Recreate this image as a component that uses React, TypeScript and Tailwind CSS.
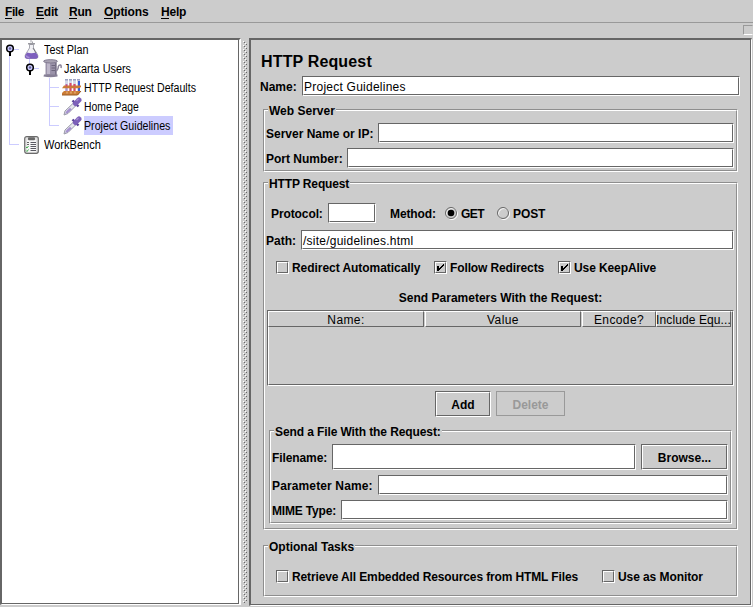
import type { ReactNode } from "react";

/** Metal "flush 3D" border: a dark frame with a white frame offset by one pixel. */
function Flush({ className = "", inner = "", children }: { className?: string; inner?: string; children?: ReactNode }) {
  return (
    <div className={`shrink-0 border border-t-[#666] border-l-[#666] border-b-white border-r-white ${className}`}>
      <div className={`h-full w-full border border-t-white border-l-white border-b-[#666] border-r-[#666] ${inner}`}>{children}</div>
    </div>
  );
}

function Field({ className = "", value = "" }: { className?: string; value?: string }) {
  return (
    <Flush className={`h-5 bg-white font-normal ${className}`} inner="flex items-center">
      <span className="pt-[2px] tracking-[0.24px]">{value}</span>
    </Flush>
  );
}

function Label({ className = "", children }: { className?: string; children: ReactNode }) {
  return <span className={`shrink-0 pt-[2px] ${className}`}>{children}</span>;
}

function Group({ title, legend = "", className = "", inner = "", children }: { title: string; legend?: string; className?: string; inner?: string; children: ReactNode }) {
  return (
    <div className={`relative shrink-0 border border-t-[#8e8e8e] border-l-[#8e8e8e] border-b-white border-r-white ${className}`}>
      <span className={`absolute -top-[7px] left-[4px] h-4 bg-[#ccc] px-px leading-4 ${legend}`}>{title}</span>
      <div className={`flex h-full flex-col border border-t-white border-l-white border-b-[#8e8e8e] border-r-[#8e8e8e] ${inner}`}>{children}</div>
    </div>
  );
}

function Check({ label, on, className = "" }: { label: string; on?: boolean; className?: string }) {
  return (
    <label className="flex h-[13px] shrink-0 items-center gap-[3px]">
      <Flush className="h-[13px] w-[13px]">
        {on && (
          <svg width="9" height="9" viewBox="0 0 9 9" shapeRendering="crispEdges">
            <path d="M1 3h2v5H1zM3 5h1v2H3zM4 4h1v2H4zM5 3h1v2H5zM6 2h1v2H6zM7 1h1v2H7z" fill="#000" />
          </svg>
        )}
      </Flush>
      <span className={className}>{label}</span>
    </label>
  );
}

function Radio({ label, on, className = "" }: { label: string; on?: boolean; className?: string }) {
  return (
    <label className="flex shrink-0 items-center gap-[3px]">
      <svg width="13" height="13" viewBox="0 0 13 13">
        <circle cx="7" cy="7" r="5.500" fill="none" stroke="#fff" />
        <circle cx="6" cy="6" r="5.500" fill="none" stroke="#666" />
        {on && <circle cx="6" cy="6" r="3.300" fill="#000" />}
      </svg>
      <Label className={className}>{label}</Label>
    </label>
  );
}

function Flask() {
  return (
    <svg width="16" height="20" viewBox="0 0 16 20">
      <path d="M5.500 4.500v3.500L1.200 15Q.3 18.500 3 18.500h9Q14.700 18.500 13.800 15L9.500 8V4.500z" fill="#f0f0f4" stroke="#a9a9b2" />
      <path d="M3 12.500q4 1.500 9 0l2 3.500q.3 2.800-2.500 2.800H3.500Q.7 18.800 1 16z" fill="#7d5fbe" />
      <path d="M2.500 15.500q0 2 3 2" fill="none" stroke="#a990d8" strokeWidth="1.400" />
      <path d="M4 3.800h7" stroke="#808088" strokeWidth="1.200" />
      <path d="M7 0v2.500M8.500 1.500v1.500" stroke="#a2a2aa" />
      <path d="M9 8l3 5" stroke="#77777f" />
    </svg>
  );
}

function Spool() {
  return (
    <svg width="19" height="19" viewBox="0 0 19 19">
      <path d="M2.500 3h11v13h-11z" fill="#9a92a9" />
      <path d="M4 4h3v11H4z" fill="#bdb6c9" />
      <path d="M12 4h1.500v12H12z" fill="#766f86" />
      <ellipse cx="7.500" cy="2.300" rx="7" ry="1.700" fill="#a8a2b3" stroke="#787188" strokeWidth=".8" />
      <path d="M1 15.500h13.500v2q-7 1.500-14 0z" fill="#867f95" />
      <path d="M8.500 6.500h3.500M8.500 9h3.500M8.500 11.500h3.500" stroke="#6d657c" />
      <path d="M13.500 12q2-2 1.800-4.500Q16 5.500 17.500 6q1 .6.500 3" fill="none" stroke="#8b849a" strokeWidth="1.500" />
    </svg>
  );
}

function TestTubes() {
  return (
    <svg width="20" height="17" viewBox="0 0 20 17">
      <path d="M4.500 1v12M8.500 1v12M12.500 1v12M16.500 1v12" stroke="#d3d8ea" strokeWidth="3" />
      <path d="M4.500 5v8" stroke="#a78fd0" strokeWidth="2" />
      <path d="M8.500 4v10M12.500 5v9" stroke="#dc4666" strokeWidth="2" />
      <path d="M17 2v11" stroke="#3a5bd6" strokeWidth="2" />
      <path d="M3 .8h3M7 .8h3M11 .8h3M15 .8h3" stroke="#737ba8" />
      <path d="M2 6.500h17v1.500l-2 1.200H0z" fill="#cb7c36" />
      <path d="M2 12h17l-3 4H0v-2z" fill="#cb7c36" />
      <path d="M5 12.500v2M9 12.500v2M13 12.500v2" stroke="#f0c090" />
      <path d="M0 16h15.500l3.500-4" fill="none" stroke="#9a5a25" />
      <path d="M4.500 5.500v2M8.500 5.500v2M12.500 5.500v2" stroke="#d84a6c" strokeWidth="1.500" />
    </svg>
  );
}

function Dropper() {
  return (
    <svg width="19" height="19" viewBox="0 0 19 19">
      <path d="M1 18l1-4L11 5.500l2.500 2.500L5 16.500z" fill="#e6e6ee" stroke="#9a9aa8" />
      <path d="M2 16.800l1.500-2.800L7 10.800l1.800 1.800L5 16z" fill="#a591cf" />
      <path d="M9.500 3.500l6 6" stroke="#5a4396" strokeWidth="2.400" />
      <path d="M12.500 6.500l3.500-3.500" stroke="#7d60ba" strokeWidth="5" strokeLinecap="round" />
      <path d="M13.500 4l2-2" stroke="#a48fd2" strokeWidth="1.300" />
    </svg>
  );
}

function Clipboard() {
  return (
    <svg width="15" height="18" viewBox="0 0 15 18">
      <rect x=".7" y=".7" width="13.600" height="16.600" rx="2" fill="#e2e2e2" stroke="#6b6b6b" strokeWidth="1.200" />
      <path d="M3 4h9v12H3z" fill="#f7f7f7" />
      <rect x="4" y="1.200" width="7" height="3" rx="1" fill="#686868" />
      <path d="M6.500 6.500h5.500M6.500 8.500h5.500M6.500 10.500h5.500M6.500 12.500h5.500M6.500 14.500h5.500" stroke="#5a5a62" />
      <path d="M3 6.500h2M3 8.500h2" stroke="#666" />
      <path d="M2 11l1 1 1.500-2M2 14.500l1 1 1.500-2" fill="none" stroke="#3fae4c" />
    </svg>
  );
}

/** Expand handles and the connecting lines of the tree. */
function Connectors() {
  return (
    <svg className="absolute top-0 left-0" width="70" height="120" viewBox="2 40 70 120">
      <path
        d="M9.500 55v89.500M9 144.500h10M13 49.500h6M29.500 59v5M33 68.500h6M49.500 78v47.500M49 87.500h10M49 106.500h10M49 125.500h10"
        fill="none" stroke="#ccf" shapeRendering="crispEdges"
      />
      {[[10, 48.500], [30, 67.500]].map(([x, y]) => (
        <g key={y}>
          <circle cx={x} cy={y} r="3.300" fill="#ccccff" stroke="#000" strokeWidth="1.500" />
          <circle cx={x} cy={y} r="1.200" fill="#666699" />
          <path d={`M${x} ${y + 3}v4.500`} stroke="#000" strokeWidth="2" />
        </g>
      ))}
    </svg>
  );
}

const tree: { label: string; pad: string; icon: ReactNode; box: string; row?: string; text: string }[] = [
  { label: "Test Plan", pad: "pl-[22px]", icon: <Flask />, box: "w-[18px]", text: "scale-x-[0.9]" },
  { label: "Jakarta Users", pad: "pl-[41px]", icon: <Spool />, box: "w-[19px]", text: "scale-x-[0.905]" },
  { label: "HTTP Request Defaults", pad: "pl-[60px]", icon: <TestTubes />, box: "w-[20px]", text: "scale-x-[0.885]" },
  { label: "Home Page", pad: "pl-[61px]", icon: <Dropper />, box: "w-[19px]", text: "scale-x-[0.865]" },
  { label: "Project Guidelines", pad: "pl-[61px]", icon: <Dropper />, box: "w-[19px]", row: "bg-[#ccccff]", text: "scale-x-[0.887]" },
  { label: "WorkBench", pad: "pl-[22px]", icon: <Clipboard />, box: "w-[18px]", text: "scale-x-[0.92]" },
];

const menus: [string, string, string][] = [
  ["F", "ile", "w-[31px] tracking-[-0.4px]"],
  ["E", "dit", "w-[33px] tracking-[-0.2px]"],
  ["R", "un", "w-[35px] tracking-[-0.2px]"],
  ["O", "ptions", "w-[57px] tracking-[-0.1px]"],
  ["H", "elp", "w-[30px] tracking-[-0.2px]"],
];

function HeaderCell({ label, className }: { label: string; className: string }) {
  return (
    <div className={`flex h-4 shrink-0 items-center justify-center border border-t-white border-l-white border-b-[#666] border-r-[#666] whitespace-nowrap ${className}`}>
      <span className="pt-[2px]">{label}</span>
    </div>
  );
}

export default function App() {
  return (
    <div className="flex h-[607px] w-[753px] flex-col overflow-hidden bg-[#ccc] font-['Liberation_Sans',Arial,sans-serif] text-[12px] leading-[14px] font-bold whitespace-nowrap text-black">
      <nav className="flex h-[23px] shrink-0 items-center border-b border-[#999] pt-[2px] pl-[5px]">
        {menus.map(([key, rest, w]) => (
          <span key={key} className={`shrink-0 ${w}`}>
            <span className="inline-block h-[14px] border-b border-black">{key}</span>
            {rest}
          </span>
        ))}
      </nav>
      <div className="flex h-[15px] shrink-0 justify-end pt-[2px]">
        <div className="h-[10px] w-[10px] border border-t-[#999] border-l-[#999] border-b-white border-r-[#ccc]" />
      </div>

      <main className="flex h-[569px] shrink-0">
        <aside className="relative h-[567px] w-[241px] shrink-0 border-t-2 border-l-2 border-r-2 border-b border-t-[#666] border-l-[#666] border-r-white border-b-white">
          <div className="h-full border-r border-b border-[#666] bg-white font-normal">
            <Connectors />
            {tree.map((n, i) => (
              <div key={i} className={`flex h-[19px] items-center ${n.pad}`}>
                <span className={`flex shrink-0 items-center ${n.box}`}>{n.icon}</span>
                <span className={`ml-[2px] h-[19px] w-[89px] leading-[20px] ${n.row ?? ""}`}>
                  <span className={`inline-block origin-left ${n.text}`}>{n.label}</span>
                </span>
              </div>
            ))}
          </div>
        </aside>

        <div className="flex w-2 shrink-0 py-[3px] pl-[2px]">
          <svg width="4" height="562" shapeRendering="crispEdges">
            <defs>
              <pattern id="bumps" width="4" height="4" patternUnits="userSpaceOnUse">
                <path d="M0 0h1v1H0zM2 2h1v1H2z" fill="#fff" />
                <path d="M1 1h1v1H1zM3 3h1v1H3z" fill="#666" />
              </pattern>
            </defs>
            <rect width="4" height="562" fill="url(#bumps)" />
          </svg>
        </div>

        <section className="h-[568px] w-[503px] shrink-0 border-t-2 border-l-2 border-r border-b border-t-[#666] border-l-[#666] border-r-white border-b-white">
          <div className="flex h-full flex-col border-r border-b border-[#666] pl-[9px]">
            <h1 className="h-[36px] pt-[12px] pl-px text-[16px] leading-[20px] tracking-[0.15px]">HTTP Request</h1>
            <div className="flex h-5 shrink-0 items-center">
              <Label className="w-[42px]">Name:</Label>
              <Field className="w-[438px]" value="Project Guidelines" />
            </div>

            <Group title="Web Server" className="mt-[13px] ml-[3px] h-[63px] w-[475px]" inner="gap-[5px] pt-[12px] pl-[1px]">
              <div className="flex items-center">
                <Label className="w-[112px]">Server Name or IP:</Label>
                <Field className="w-[356px]" />
              </div>
              <div className="flex items-center">
                <Label className="w-[81px]">Port Number:</Label>
                <Field className="w-[387px]" />
              </div>
            </Group>

            <Group title="HTTP Request" legend="tracking-[-0.13px]" className="mt-[10px] ml-[3px] h-[348px] w-[475px]" inner="pt-[19px]">
              <div className="flex h-5 items-center pl-[6px]">
                <Label className="w-[57px] tracking-[-0.1px]">Protocol:</Label>
                <Field className="w-[48px]" />
                <Label className="ml-[14px] w-[55px] tracking-[-0.1px]">Method:</Label>
                <div className="flex">
                  <div className="w-[52px]"><Radio label="GET" on className="tracking-[-0.6px]" /></div>
                  <Radio label="POST" className="tracking-[-0.1px]" />
                </div>
              </div>
              <div className="mt-[7px] flex items-center pl-[1px]">
                <Label className="w-[35px]">Path:</Label>
                <Field className="w-[433px]" value="/site/guidelines.html" />
              </div>
              <div className="mt-[11px] flex pl-[11px]">
                <div className="w-[158px]"><Check label="Redirect Automatically" className="tracking-[-0.05px]" /></div>
                <div className="w-[124px]"><Check label="Follow Redirects" on className="tracking-[-0.12px]" /></div>
                <Check label="Use KeepAlive" on className="tracking-[-0.1px]" />
              </div>
              <div className="mt-[17px] h-[19px] text-center">Send Parameters With the Request:</div>
              <Flush className="ml-[2px] h-[76px] w-[467px]">
                <div className="-mt-px -ml-px flex font-normal tracking-[0.4px]">
                  <HeaderCell label="Name:" className="mr-px w-[156px]" />
                  <HeaderCell label="Value" className="mr-px w-[156px]" />
                  <HeaderCell label="Encode?" className="w-[74px]" />
                  <HeaderCell label="Include Equ..." className="w-[75px] tracking-[0.1px]" />
                </div>
              </Flush>
              <div className="mt-[5px] flex h-[26px] shrink-0 gap-[5px] pl-[170px]">
                <Flush className="h-[26px] w-[56px]" inner="flex items-center justify-center pt-[2px]">Add</Flush>
                <div className="flex h-[25px] w-[69px] items-center justify-center border border-[#999] pt-[2px] text-[#999]">Delete</div>
              </div>
              <Group title="Send a File With the Request:" legend="tracking-[-0.1px]" className="mt-[13px] ml-[4px] h-[94px] w-[463px]" inner="pt-[12px] pl-[1px]">
                <div className="flex items-center">
                  <Label className="w-[60px] tracking-[-0.1px]">Filename:</Label>
                  <Flush className="h-[26px] w-[304px] bg-white" />
                  <Flush className="ml-[5px] h-[26px] w-[87px]" inner="flex items-center justify-center pt-[2px]">Browse...</Flush>
                </div>
                <div className="mt-[5px] flex items-center">
                  <Label className="w-[106px] tracking-[0.13px]">Parameter Name:</Label>
                  <Field className="w-[350px]" />
                </div>
                <div className="mt-[5px] flex items-center">
                  <Label className="w-[69px] tracking-[-0.18px]">MIME Type:</Label>
                  <Field className="w-[387px]" />
                </div>
              </Group>
            </Group>

            <Group title="Optional Tasks" className="mt-[15px] ml-[3px] h-[52px] w-[475px]" inner="pt-[23px] pl-[11px]">
              <div className="flex">
                <div className="w-[326px]"><Check label="Retrieve All Embedded Resources from HTML Files" className="tracking-[-0.13px]" /></div>
                <Check label="Use as Monitor" className="tracking-[-0.08px]" />
              </div>
            </Group>
          </div>
        </section>
      </main>
    </div>
  );
}
